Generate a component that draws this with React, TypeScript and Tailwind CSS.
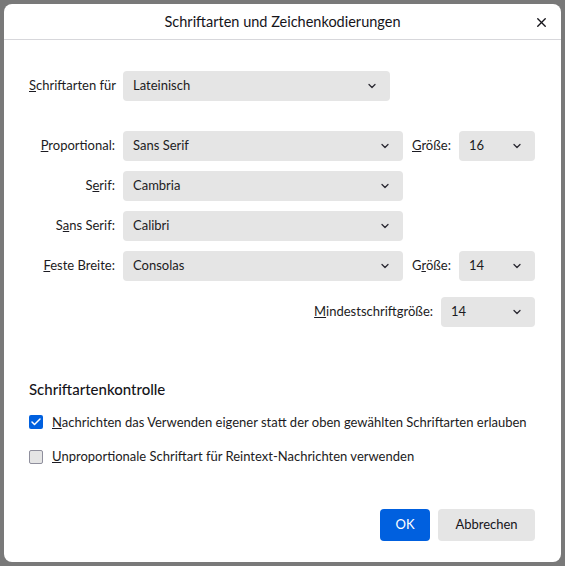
import React from "react";
import { ChevronDown, X, Check } from "lucide-react";

const font = { fontFamily: 'Lato, "Noto Sans", sans-serif' };

function Select({ value, width }: { value: string; width: string }) {
  return (
    <div
      className={`${width} h-[30px] flex items-center justify-between rounded-[4px] bg-[#e5e5e5] pl-[10px] pr-[12px] text-[13px] text-[#1c1b22]`}
    >
      <span>{value}</span>
      <ChevronDown className="h-[12px] w-[12px] text-[#2b2a33]" strokeWidth={2.6} />
    </div>
  );
}

function Label({ children, className = "" }: { children: React.ReactNode; className?: string }) {
  return <span className={`whitespace-nowrap text-[13px] text-[#1c1b22] ${className}`}>{children}</span>;
}

export default function App() {
  return (
    <div className="w-[565px] h-[566px] bg-[#797979] pt-[4px] pl-[4px]" style={font}>
      <div className="w-[557px] h-[558px] bg-white rounded-[8px] flex flex-col">
        {/* header */}
        <div className="relative h-[36px] border-b border-[#d7d7db] flex items-center justify-center">
          <span className="text-[14.5px] text-[#15141a]">Schriftarten und Zeichenkodierungen</span>
          <X className="absolute right-[12px] top-[11px] h-[15px] w-[15px] text-[#15141a]" strokeWidth={2.2} />
        </div>

        <div className="flex flex-col pl-[25px] pr-[26px] flex-1">
          <div className="mt-[31px] w-[361px] flex items-center gap-[7px]">
            <Label>
              <u>S</u>chriftarten für
            </Label>
            <div className="flex-1">
              <Select value="Lateinisch" width="w-full" />
            </div>
          </div>

          <div className="mt-[30px] flex flex-col gap-[10px]">
            <div className="flex items-center">
              <Label className="w-[86px] text-right">
                <u>P</u>roportional:
              </Label>
              <div className="ml-[8px]">
                <Select value="Sans Serif" width="w-[280px]" />
              </div>
              <Label className="ml-[9px]">
                <u>G</u>röße:
              </Label>
              <div className="ml-[8px]">
                <Select value="16" width="w-[76px]" />
              </div>
            </div>
            <div className="flex items-center">
              <Label className="w-[86px] text-right">
                S<u>e</u>rif:
              </Label>
              <div className="ml-[8px]">
                <Select value="Cambria" width="w-[280px]" />
              </div>
            </div>
            <div className="flex items-center">
              <Label className="w-[86px] text-right">
                S<u>a</u>ns Serif:
              </Label>
              <div className="ml-[8px]">
                <Select value="Calibri" width="w-[280px]" />
              </div>
            </div>
            <div className="flex items-center">
              <Label className="w-[86px] text-right">
                <u>F</u>este Breite:
              </Label>
              <div className="ml-[8px]">
                <Select value="Consolas" width="w-[280px]" />
              </div>
              <Label className="ml-[9px]">
                G<u>r</u>öße:
              </Label>
              <div className="ml-[8px]">
                <Select value="14" width="w-[76px]" />
              </div>
            </div>
          </div>

          <div className="mt-[16px] flex items-center justify-end">
            <Label>
              <u>M</u>indestschriftgröße:
            </Label>
            <div className="ml-[8px]">
              <Select value="14" width="w-[94px]" />
            </div>
          </div>

          <div className="mt-[51px] text-[15px] font-medium text-[#15141a]">Schriftartenkontrolle</div>

          <div className="mt-[12px] flex items-center">
            <div className="w-[14px] h-[14px] rounded-[2px] bg-[#0060df] flex items-center justify-center">
              <Check className="h-[12px] w-[12px] text-white" strokeWidth={3} />
            </div>
            <Label className="ml-[9px]">
              <u>N</u>achrichten das Verwenden eigener statt der oben gewählten Schriftarten erlauben
            </Label>
          </div>
          <div className="mt-[15px] flex items-center">
            <div className="w-[14px] h-[14px] rounded-[2px] bg-[#e5e5e5] border border-[#8f8f9d]" />
            <Label className="ml-[9px]">
              <u>U</u>nproportionale Schriftart für Reintext-Nachrichten verwenden
            </Label>
          </div>

          <div className="mt-auto mb-[21px] flex justify-end gap-[8px]">
            <button className="w-[50px] h-[32px] rounded-[4px] bg-[#0060df] text-white text-[13px]">OK</button>
            <button className="w-[97px] h-[32px] rounded-[4px] bg-[#e5e5e5] text-[#15141a] text-[13px]">
              Abbrechen
            </button>
          </div>
        </div>
      </div>
    </div>
  );
}
